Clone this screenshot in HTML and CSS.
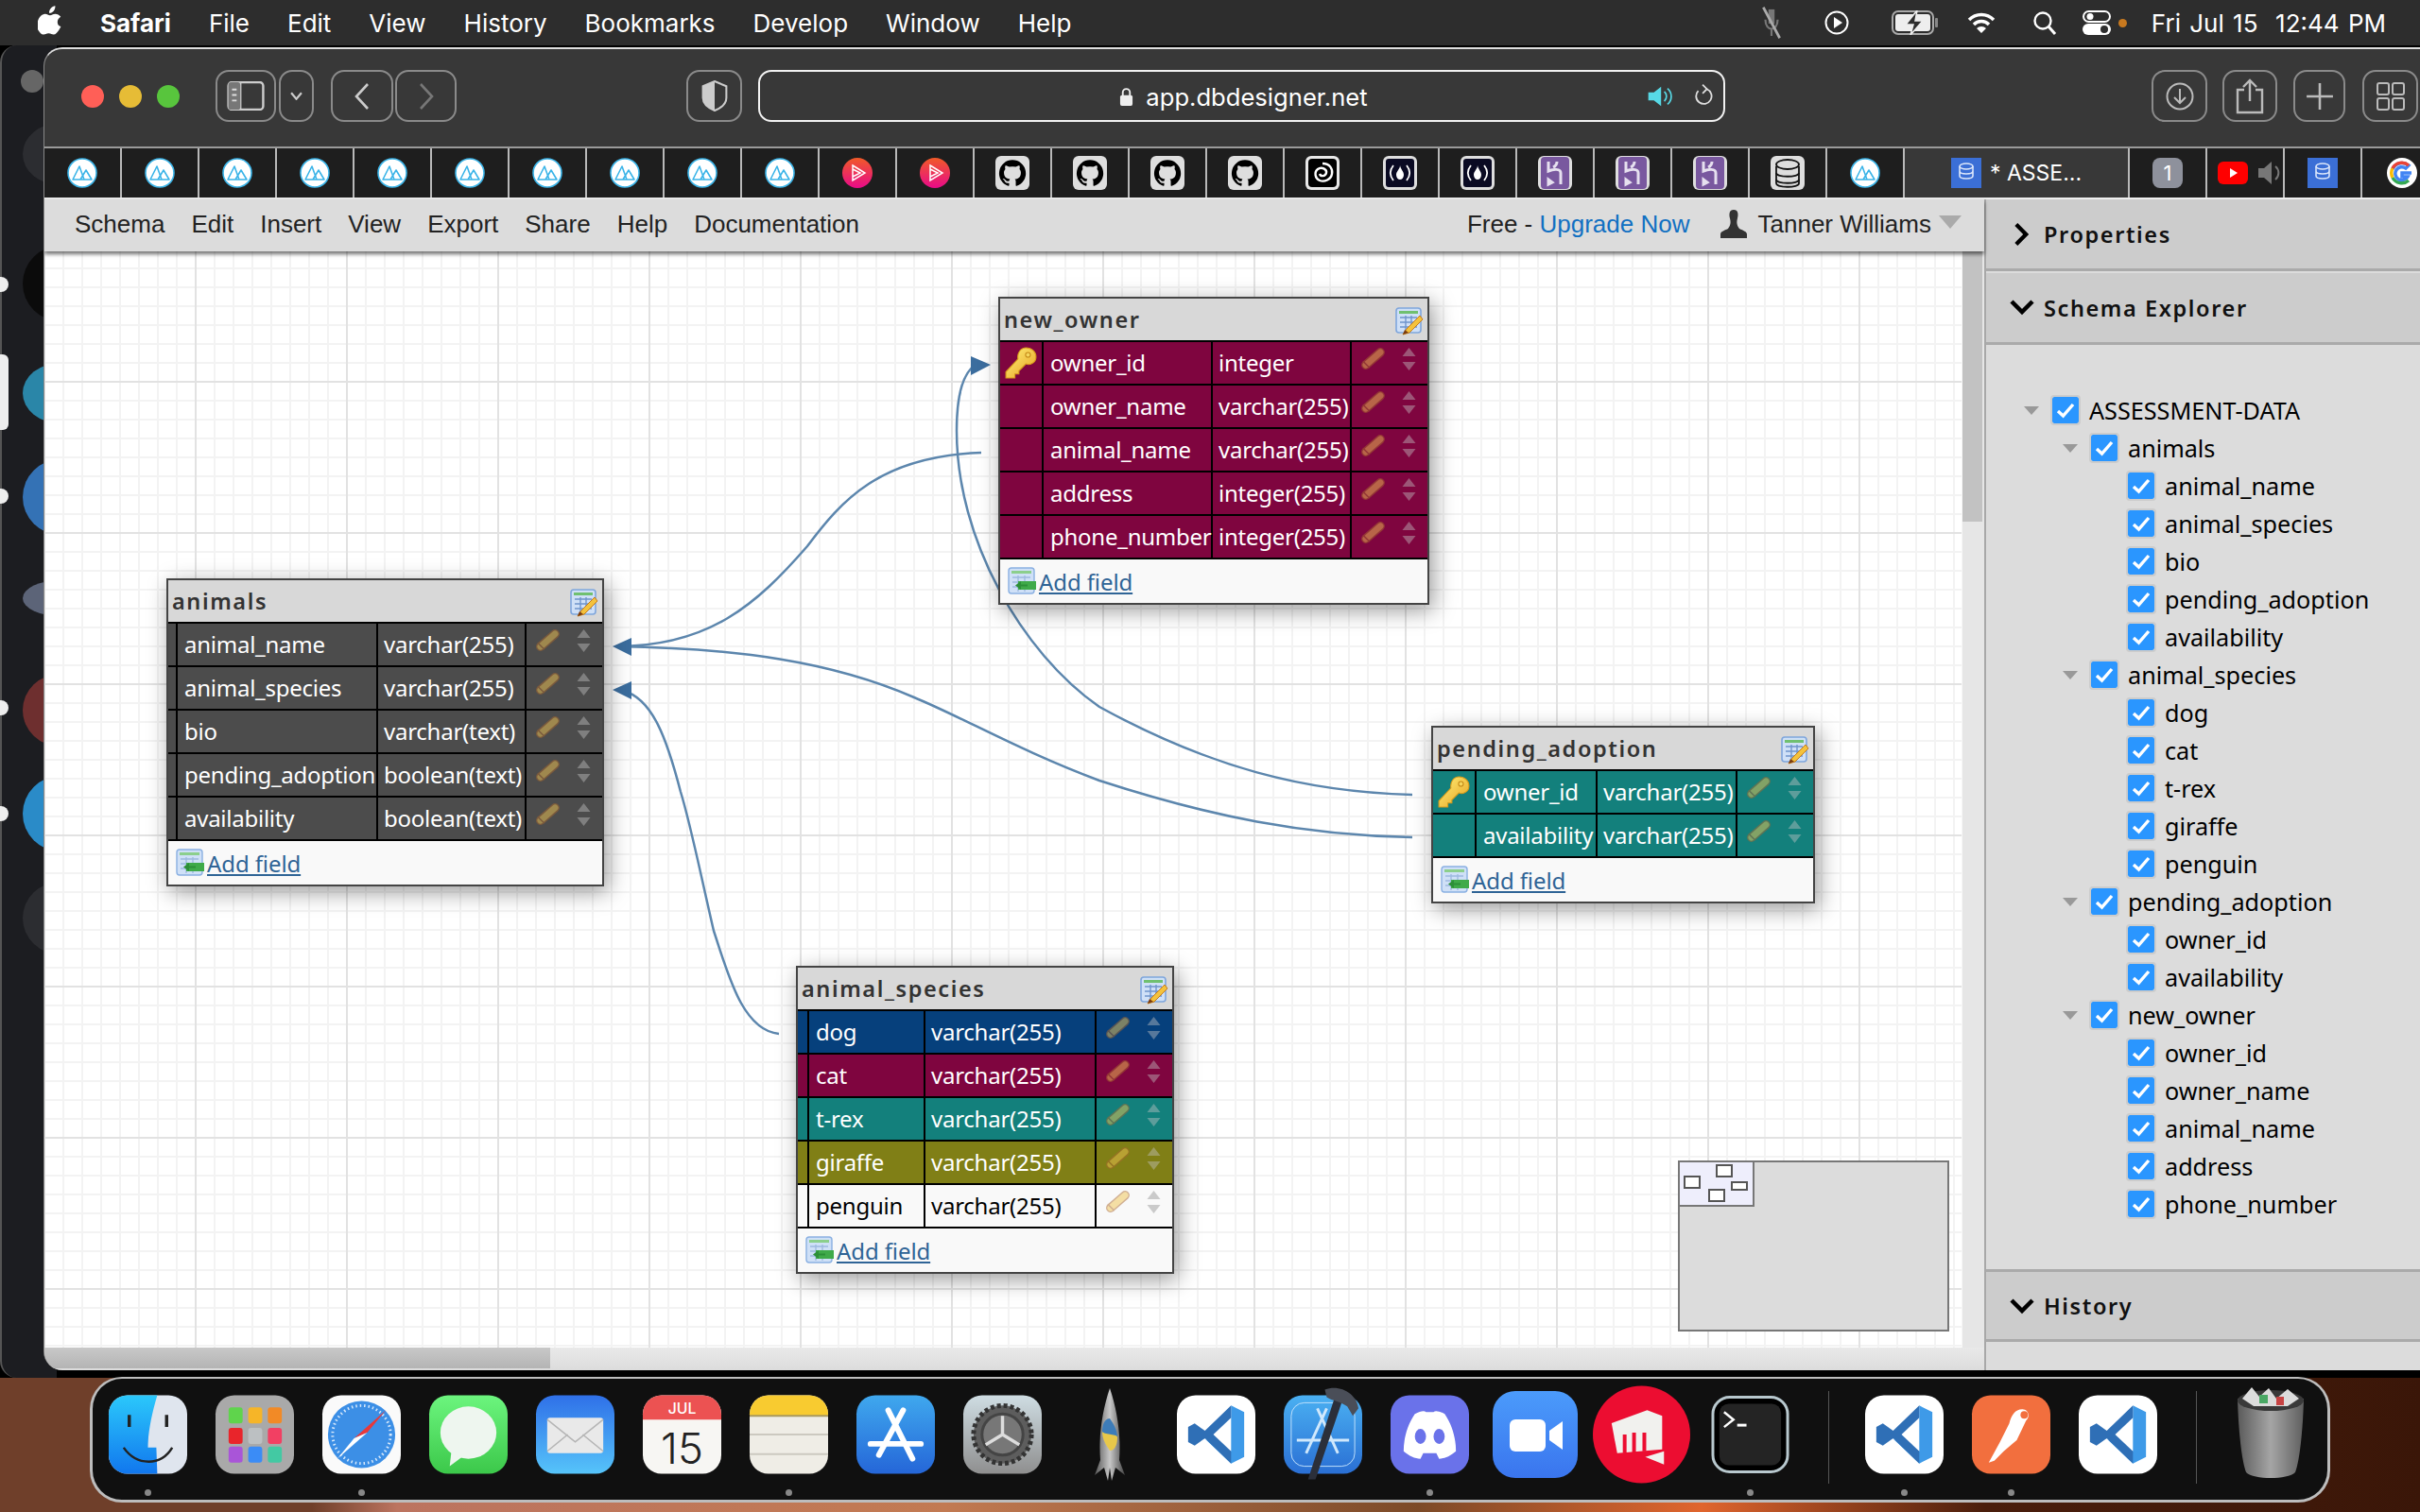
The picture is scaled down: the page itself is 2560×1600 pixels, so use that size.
FILE: index.html
```html
<!DOCTYPE html>
<html lang="en">
<head>
<meta charset="utf-8">
<title>app.dbdesigner.net</title>
<link rel="stylesheet" href="styles.css">
</head>
<body>
<svg class="defs" width="0" height="0" aria-hidden="true">
  <defs>
    <linearGradient id="gPlural" x1="0" y1="0" x2="0" y2="1"><stop offset="0" stop-color="#f05a28"/><stop offset="1" stop-color="#e80a89"/></linearGradient>
    <linearGradient id="gFinder" x1="0" y1="0" x2="0" y2="1"><stop offset="0" stop-color="#2bc8fb"/><stop offset="1" stop-color="#1177ee"/></linearGradient>
    <linearGradient id="gMsg" x1="0" y1="0" x2="0" y2="1"><stop offset="0" stop-color="#6cf57e"/><stop offset="1" stop-color="#3cc84a"/></linearGradient>
    <linearGradient id="gMail" x1="0" y1="0" x2="0" y2="1"><stop offset="0" stop-color="#2f70e8"/><stop offset="1" stop-color="#56c4fa"/></linearGradient>
    <linearGradient id="gStore" x1="0" y1="0" x2="0" y2="1"><stop offset="0" stop-color="#3fa8ee"/><stop offset="1" stop-color="#2566d8"/></linearGradient>
    <linearGradient id="gPrefs" x1="0" y1="0" x2="0" y2="1"><stop offset="0" stop-color="#cfdde3"/><stop offset="1" stop-color="#8f8f8f"/></linearGradient>
    <linearGradient id="gXcode" x1="0" y1="0" x2="0" y2="1"><stop offset="0" stop-color="#4ab0f2"/><stop offset="1" stop-color="#2a6fd4"/></linearGradient>
    <linearGradient id="gZoom" x1="0" y1="0" x2="0" y2="1"><stop offset="0" stop-color="#4b9bfb"/><stop offset="1" stop-color="#3a75ee"/></linearGradient>
    <linearGradient id="gTrash" x1="0" y1="0" x2="1" y2="0"><stop offset="0" stop-color="#5a5a5a"/><stop offset=".5" stop-color="#a5a5a5"/><stop offset="1" stop-color="#5f5f5f"/></linearGradient>
    <linearGradient id="gRocket" x1="0" y1="0" x2="1" y2="0"><stop offset="0" stop-color="#555"/><stop offset=".5" stop-color="#c8c8c8"/><stop offset="1" stop-color="#444"/></linearGradient>
    <linearGradient id="gKey" x1="0" y1="0" x2="1" y2="1"><stop offset="0" stop-color="#fff07a"/><stop offset="1" stop-color="#e7a21f"/></linearGradient>

    <symbol id="i-prisma" viewBox="0 0 32 32">
      <circle cx="16" cy="16" r="15" fill="#fff" stroke="#3bb4e8" stroke-width="1.6"/>
      <path d="M6 23 L13 9 L18 23 Z M14 23 L20 13 L26 23 Z" fill="none" stroke="#3bb4e8" stroke-width="1.6" stroke-linejoin="round"/>
    </symbol>
    <symbol id="i-plural" viewBox="0 0 32 32">
      <circle cx="16" cy="16" r="16" fill="url(#gPlural)"/>
      <path d="M11 8 L24 16 L11 24 Z M11 12 L19 16 L11 20" fill="none" stroke="#fff" stroke-width="1.5"/>
    </symbol>
    <symbol id="i-gh" viewBox="0 0 36 36">
      <rect width="36" height="36" rx="6" fill="#dedede"/>
      <path transform="translate(4 4) scale(1.17)" fill="#000" d="M12 .3a12 12 0 0 0-3.8 23.4c.6.1.8-.3.8-.6v-2c-3.3.7-4-1.6-4-1.6-.6-1.4-1.4-1.8-1.4-1.8-1-.7.1-.7.1-.7 1.2 0 1.9 1.2 1.9 1.2 1 1.8 2.8 1.3 3.5 1 0-.8.4-1.3.7-1.6-2.7-.3-5.5-1.3-5.5-6 0-1.2.5-2.3 1.3-3.1-.2-.4-.6-1.6 0-3.2 0 0 1-.3 3.4 1.2a11.5 11.5 0 0 1 6 0c2.3-1.5 3.3-1.2 3.3-1.2.6 1.6.2 2.8 0 3.2.9.8 1.3 1.9 1.3 3.2 0 4.6-2.8 5.6-5.5 5.9.5.4.9 1 .9 2.2v3.3c0 .3.1.7.8.6A12 12 0 0 0 12 .3"/>
    </symbol>
    <symbol id="i-spiral" viewBox="0 0 36 36">
      <rect width="36" height="36" rx="6" fill="#e8e8e8"/>
      <rect x="3" y="3" width="30" height="30" rx="4" fill="#000"/>
      <path d="M18 8 C26 8 29 14 28 19 C27 25 20 28 15 26 C10 24 9 17 13 14 C17 11 23 14 22 18 C21 22 16 22 15 19" fill="none" stroke="#fff" stroke-width="2.4"/>
    </symbol>
    <symbol id="i-fcc" viewBox="0 0 36 36">
      <rect width="36" height="36" rx="6" fill="#dedede"/>
      <rect x="3" y="3" width="30" height="30" rx="3" fill="#0a0a23"/>
      <path d="M11 10 C7 15 7 21 11 26 M25 10 C29 15 29 21 25 26" fill="none" stroke="#fff" stroke-width="1.8"/>
      <path d="M18 10 C18 14 14 16 14 20 C14 23 16 25 18 25 C20 25 22 23 22 20 C22 16 19 15 18 10Z" fill="#fff"/>
    </symbol>
    <symbol id="i-heroku" viewBox="0 0 36 36">
      <rect width="36" height="36" rx="6" fill="#dedede"/>
      <rect x="3" y="1" width="30" height="34" rx="4" fill="#79589f"/>
      <path d="M11 6 V16 C16 14 24 13 24 18 V30 M11 30 V25 L15 28 L11 30Z M20 6 C20 9 18 11 16 12" fill="none" stroke="#e6e0ef" stroke-width="3"/>
    </symbol>
    <symbol id="i-stack" viewBox="0 0 36 36">
      <rect width="36" height="36" rx="6" fill="#dedede"/>
      <g fill="#ddd" stroke="#111" stroke-width="1.8">
        <path d="M6 25 v4 c0 5 24 5 24 0 v-4"/><path d="M6 18 v7 c0 5 24 5 24 0 v-7"/><path d="M6 11 v7 c0 5 24 5 24 0 v-7"/>
        <ellipse cx="18" cy="9" rx="12" ry="5"/>
      </g>
    </symbol>
    <symbol id="i-dbd" viewBox="0 0 32 32">
      <rect width="32" height="32" fill="#3b6fd6"/>
      <g fill="none" stroke="#dbe6fa" stroke-width="1.6">
        <ellipse cx="16" cy="9" rx="7" ry="3"/><path d="M9 9 v5 c0 4 14 4 14 0 v-5 M9 14 v5 c0 4 14 4 14 0 v-5"/>
      </g>
    </symbol>
    <symbol id="i-edit" viewBox="0 0 30 30">
      <rect x="1" y="1" width="26" height="26" rx="3" fill="#cfe0f7" stroke="#7fa6dc" stroke-width="1.6"/>
      <rect x="4" y="4" width="20" height="3" fill="#70c070"/>
      <path d="M5 11 H23 M5 16 H23 M5 21 H23 M11 9 V25 M17 9 V25" stroke="#6f94cc" stroke-width="1.4"/>
      <path d="M26 9 L12 23 L8 29 L15 27 L29 13 Z" fill="#f4c23c" stroke="#c47a1c" stroke-width="1"/>
      <path d="M8 29 L10 24 L14 27 Z" fill="#7a3c10"/>
    </symbol>
    <symbol id="i-add" viewBox="0 0 30 30">
      <rect x="1" y="1" width="27" height="27" rx="3" fill="#cfe0f7" stroke="#8ab0e2" stroke-width="1.4"/>
      <rect x="4" y="4" width="21" height="3" fill="#8ccf8c"/>
      <path d="M5 11 H24 M5 16 H24 M5 21 H24 M11 9 V26 M18 9 V26" stroke="#9db8df" stroke-width="1.3"/>
      <path d="M11 15 H30 V24 H11 Z" fill="#3faa49"/>
      <path d="M8 19.500 L14 15 V24 Z M12 18.500 H21 V20.500 H12 Z" fill="#2c8f38"/>
    </symbol>
    <symbol id="i-pencil" viewBox="0 0 26 24">
      <path d="M5 19 L21 5" fill="none" stroke="#a9682f" stroke-width="10" stroke-linecap="round"/>
      <path d="M5 19 L21 5" fill="none" stroke="#f1c451" stroke-width="7" stroke-linecap="round"/>
      <path d="M2 15 L9 22" stroke="#a9682f" stroke-width="1.500"/>
    </symbol>
    <symbol id="i-updown" viewBox="0 0 14 24">
      <path d="M7 0 L14 9 H0 Z M0 15 H14 L7 24 Z" fill="#c6c6c6"/>
    </symbol>
    <symbol id="i-key" viewBox="0 0 32 32">
      <path d="M21 1 C27 1 31 5 31 10 C31 15 26 19 21 17 L14 24 L14 27 L10 27 L10 31 L1 31 L1 25 L13 12 C12 6 16 1 21 1Z" fill="url(#gKey)" stroke="#d69a1a" stroke-width="1"/>
      <circle cx="23" cy="8" r="2.4" fill="#f5d65e" stroke="#c48a18"/>
    </symbol>
    <symbol id="i-check" viewBox="0 0 28 28">
      <rect width="28" height="28" rx="2" fill="#2a96ff"/>
      <path d="M6 15 L11.5 20 L22 8" fill="none" stroke="#fff" stroke-width="3.4"/>
    </symbol>
    <symbol id="i-code" viewBox="0 0 84 84">
      <rect width="84" height="84" rx="20" fill="#fff"/>
      <path d="M58 11 L72 18 V66 L58 73 L22 39 L12 47 L20 42 L58 60 Z" fill="#3e9ae8"/>
      <path d="M58 11 L30 38 L19 30 L12 34 V50 L19 54 L30 46 L58 73 V60 L39 42 L58 24 Z" fill="#2f6fb6"/>
    </symbol>
  </defs>
</svg>

<div class="screen">
  <div class="under-window">
    <span class="uw-pill"></span>
    <span class="uw-avatar av-0"></span><span class="uw-avatar av-1"></span><span class="uw-avatar av-2"></span><span class="uw-avatar av-3"></span><span class="uw-avatar av-4"></span><span class="uw-avatar av-5"></span><span class="uw-avatar av-6"></span><span class="uw-avatar av-7"></span>
    <span class="uw-dot uw-a"></span><span class="uw-dot uw-b"></span><span class="uw-dot uw-c"></span><span class="uw-dot uw-d"></span>
    <span class="uw-tab"></span>
  </div>

  <header class="menubar">
    <svg class="apple" viewBox="0 0 24 28"><path fill="#fff" d="M17 0c.2 2-.6 3.700-1.600 4.900-1 1.200-2.700 2.200-4.300 2-.2-1.800.7-3.600 1.600-4.700C13.800 1 15.500.1 17 0zM22.500 20c-.7 1.600-1.100 2.300-2 3.700-1.300 2-3 4.200-5.100 4.200-1.900 0-2.400-1.200-4.900-1.200s-3.100 1.300-5 1.200C3.400 27.900 1.900 25.900.6 23.900-3 18 1.400 8 7 7.800c2-.1 3.300 1.300 4.900 1.300 1.600 0 2.700-1.400 5.200-1.400 1.900 0 3.900 1 5.300 2.800-4.600 2.500-3.900 9.100.1 9.500z"/></svg>
    <nav class="menu-items">
      <span class="strong">Safari</span><span>File</span><span>Edit</span><span>View</span><span>History</span><span>Bookmarks</span><span>Develop</span><span>Window</span><span>Help</span>
    </nav>
    <div class="status">
      <svg class="st st-mute" viewBox="0 0 24 30"><path d="M9 2h6v14H9z" fill="#777"/><path d="M6 12c0 12 12 12 12 0M12 22v6" fill="none" stroke="#777" stroke-width="2"/><path d="M4 0 L20 30" stroke="#aaa" stroke-width="2.5"/></svg>
      <svg class="st st-play" viewBox="0 0 26 26"><circle cx="13" cy="13" r="11.500" fill="none" stroke="#fff" stroke-width="2"/><path d="M10 7 L19 13 L10 19Z" fill="#fff"/></svg>
      <svg class="st st-batt" viewBox="0 0 50 26"><rect x="1" y="1" width="43" height="24" rx="6" fill="none" stroke="#aaa" stroke-width="2"/><rect x="4" y="4" width="37" height="18" rx="3" fill="#eee"/><rect x="46" y="8" width="3" height="10" rx="1" fill="#888"/><path d="M27 0 L15 15 H23 L20 26 L33 11 H25 Z" fill="#2d2d2d" stroke="#eee" stroke-width="1.500"/></svg>
      <svg class="st st-wifi" viewBox="0 0 30 24"><path d="M2 9 A18 18 0 0 1 28 9 M7 14 A11 11 0 0 1 23 14" fill="none" stroke="#fff" stroke-width="3.400"/><path d="M15 23 L10 18 A7 7 0 0 1 20 18 Z" fill="#fff"/></svg>
      <svg class="st st-search" viewBox="0 0 26 26"><circle cx="11" cy="11" r="8.500" fill="none" stroke="#fff" stroke-width="2.400"/><path d="M17 17 L24 25" stroke="#fff" stroke-width="3"/></svg>
      <svg class="st st-cc" viewBox="0 0 30 26"><rect x="1" y="1" width="28" height="11" rx="5.500" fill="none" stroke="#fff" stroke-width="2"/><circle cx="8" cy="6.500" r="3.500" fill="#fff"/><rect y="14" width="30" height="12" rx="6" fill="#fff"/><circle cx="23" cy="20" r="4" fill="#2d2d2d"/></svg>
      <span class="st-dot"></span>
      <span class="clock">Fri Jul 15&nbsp; 12:44 PM</span>
    </div>
  </header>

  <div class="window">
    <div class="toolbar">
      <div class="traffic"><span class="tl red"></span><span class="tl yellow"></span><span class="tl green"></span></div>
      <div class="btn b-side"><svg viewBox="0 0 40 32" class="ic-side"><rect x="1" y="1" width="38" height="30" rx="4" fill="none" stroke="#ccc" stroke-width="2.500"/><path d="M14 1 V31" stroke="#ccc" stroke-width="2.500"/><rect x="1" y="1" width="13" height="30" rx="3" fill="#777"/><path d="M5 9h5M5 15h5M5 21h5" stroke="#ddd" stroke-width="2"/></svg></div>
      <div class="btn b-drop"><svg viewBox="0 0 12 8" class="ic-drop"><path d="M1 1 L6 7 L11 1" fill="none" stroke="#ccc" stroke-width="2"/></svg></div>
      <div class="btn b-back"><svg viewBox="0 0 16 28" class="ic-nav"><path d="M14 1 L2 14 L14 27" fill="none" stroke="#ccc" stroke-width="2.600"/></svg></div>
      <div class="btn b-fwd"><svg viewBox="0 0 16 28" class="ic-nav"><path d="M2 1 L14 14 L2 27" fill="none" stroke="#777" stroke-width="2.600"/></svg></div>
      <div class="btn b-shield"><svg viewBox="0 0 26 32" class="ic-shield"><path d="M13 1 L25 6 V18 C25 25 18 29 13 31 C8 29 1 25 1 18 V6 Z" fill="none" stroke="#ccc" stroke-width="2"/><path d="M13 1 L1 6 V18 C1 25 8 29 13 31 Z" fill="#ccc"/></svg></div>
      <div class="urlbar">
        <svg viewBox="0 0 16 22" class="ic-lock"><path d="M4 10 V6 a4 4 0 0 1 8 0 V10" fill="none" stroke="#eee" stroke-width="2"/><rect x="1" y="9" width="14" height="12" rx="2" fill="#eee"/></svg>
        <span class="url-text">app.dbdesigner.net</span>
        <div class="url-right">
          <svg viewBox="0 0 30 26" class="ic-sound"><path d="M1 8 H8 L17 1 V25 L8 18 H1Z" fill="#57d9e6"/><path d="M21 7 A8 8 0 0 1 21 19 M25 3 A13 13 0 0 1 25 23" fill="none" stroke="#57d9e6" stroke-width="2"/></svg>
          <svg viewBox="0 0 22 28" class="ic-reload"><path d="M15 6 A9 9 0 1 1 5 8" fill="none" stroke="#ddd" stroke-width="2"/><path d="M10 1 L15 6 L10 11" fill="none" stroke="#ddd" stroke-width="2"/></svg>
        </div>
      </div>
      <div class="btn b-dl"><svg viewBox="0 0 30 30" class="ic-tool"><circle cx="15" cy="15" r="13.500" fill="none" stroke="#bbb" stroke-width="2"/><path d="M15 7 V22 M9 16 L15 22 L21 16" fill="none" stroke="#bbb" stroke-width="2"/></svg></div>
      <div class="btn b-share"><svg viewBox="0 0 30 38" class="ic-share"><path d="M9 12 H2 V36 H28 V12 H21 M15 24 V2 M8 9 L15 2 L22 9" fill="none" stroke="#bbb" stroke-width="2.400"/></svg></div>
      <div class="btn b-plus"><svg viewBox="0 0 28 28" class="ic-tool"><path d="M14 1 V27 M1 14 H27" stroke="#bbb" stroke-width="2.400"/></svg></div>
      <div class="btn b-grid"><svg viewBox="0 0 30 30" class="ic-tool"><g fill="none" stroke="#bbb" stroke-width="2"><rect x="1" y="1" width="12" height="12" rx="2"/><rect x="17" y="1" width="12" height="12" rx="2"/><rect x="1" y="17" width="12" height="12" rx="2"/><rect x="17" y="17" width="12" height="12" rx="2"/></g></svg></div>
    </div>

    <div class="tabs">
      <div class="tab"><svg class="tic"><use href="#i-prisma"/></svg></div>
      <div class="tab"><svg class="tic"><use href="#i-prisma"/></svg></div>
      <div class="tab"><svg class="tic"><use href="#i-prisma"/></svg></div>
      <div class="tab"><svg class="tic"><use href="#i-prisma"/></svg></div>
      <div class="tab"><svg class="tic"><use href="#i-prisma"/></svg></div>
      <div class="tab"><svg class="tic"><use href="#i-prisma"/></svg></div>
      <div class="tab"><svg class="tic"><use href="#i-prisma"/></svg></div>
      <div class="tab"><svg class="tic"><use href="#i-prisma"/></svg></div>
      <div class="tab"><svg class="tic"><use href="#i-prisma"/></svg></div>
      <div class="tab"><svg class="tic"><use href="#i-prisma"/></svg></div>
      <div class="tab"><svg class="tic"><use href="#i-plural"/></svg></div>
      <div class="tab"><svg class="tic"><use href="#i-plural"/></svg></div>
      <div class="tab"><svg class="tic-l"><use href="#i-gh"/></svg></div>
      <div class="tab"><svg class="tic-l"><use href="#i-gh"/></svg></div>
      <div class="tab"><svg class="tic-l"><use href="#i-gh"/></svg></div>
      <div class="tab"><svg class="tic-l"><use href="#i-gh"/></svg></div>
      <div class="tab"><svg class="tic-l"><use href="#i-spiral"/></svg></div>
      <div class="tab"><svg class="tic-l"><use href="#i-fcc"/></svg></div>
      <div class="tab"><svg class="tic-l"><use href="#i-fcc"/></svg></div>
      <div class="tab"><svg class="tic-l"><use href="#i-heroku"/></svg></div>
      <div class="tab"><svg class="tic-l"><use href="#i-heroku"/></svg></div>
      <div class="tab"><svg class="tic-l"><use href="#i-heroku"/></svg></div>
      <div class="tab"><svg class="tic-l"><use href="#i-stack"/></svg></div>
      <div class="tab"><svg class="tic"><use href="#i-prisma"/></svg></div>
      <div class="tab-active"><svg class="tic"><use href="#i-dbd"/></svg><span>* ASSE...</span></div>
      <div class="tab"><span class="badge-one">1</span></div>
      <div class="tab tab-yt">
        <svg class="ic-yt" viewBox="0 0 32 24"><rect width="32" height="24" rx="6" fill="#f00"/><path d="M13 7 L21 12 L13 17Z" fill="#fff"/></svg>
        <svg class="ic-spk" viewBox="0 0 26 26"><path d="M1 8 H7 L15 1 V25 L7 18 H1Z" fill="#777"/><path d="M19 6 A9 9 0 0 1 19 20" fill="none" stroke="#777" stroke-width="2"/></svg>
      </div>
      <div class="tab"><svg class="tic"><use href="#i-dbd"/></svg></div>
      <div class="tab tab-end">
        <svg class="tic" viewBox="0 0 32 32"><circle cx="16" cy="16" r="16" fill="#fff"/><path d="M26 16 H16 V20 H22 A7 7 0 1 1 20 11 L23 8 A11 11 0 0 0 6 12" fill="none" stroke="#4285f4" stroke-width="3.500"/><path d="M6 11 A11 11 0 0 0 6 21" fill="none" stroke="#fbbc05" stroke-width="3.500"/><path d="M6 21 A11 11 0 0 0 23 24" fill="none" stroke="#34a853" stroke-width="3.500"/><path d="M6 11 A11 11 0 0 1 23 8" fill="none" stroke="#ea4335" stroke-width="3.500"/></svg>
      </div>
    </div>

    <div class="app">
      <div class="left">
        <div class="appmenu">
          <nav class="app-items"><span>Schema</span><span>Edit</span><span>Insert</span><span>View</span><span>Export</span><span>Share</span><span>Help</span><span>Documentation</span></nav>
          <div class="app-right">
            <span class="plan">Free - <a class="upgrade">Upgrade Now</a></span>
            <svg class="ic-user" viewBox="0 0 28 30"><path d="M14 0 C19 0 19 5 18 9 C17 13 17 16 20 20 C24 22 28 23 28 26 V30 H0 V26 C0 23 4 22 8 20 C11 16 11 13 10 9 C9 5 9 0 14 0Z" fill="#333"/></svg>
            <span class="user">Tanner Williams</span>
            <span class="caret"></span>
          </div>
        </div>
        <div class="work">
          <div class="canvas">
            <svg class="links" viewBox="47 266 2030 1160">
              <g fill="none" stroke="#5c86ad" stroke-width="2.500">
                <path d="M1038 479 C930 483 890 530 854 578 C800 640 750 684 652 684"/>
                <path d="M1494 841 C1380 838 1280 812 1163 748 C1080 690 1012 570 1012 456 C1012 420 1018 395 1032 386"/>
                <path d="M1494 886 C1380 884 1280 864 1163 826 C1080 795 1020 760 967 738 C880 700 780 686 652 684"/>
                <path d="M824 1094 C785 1090 770 1030 755 985 C740 920 730 870 720 838 C705 780 690 740 660 731"/>
              </g>
              <g fill="#3b6d9e">
                <path d="M648 684 L668 675 V694 Z"/>
                <path d="M648 730 L668 721 V740 Z"/>
                <path d="M1048 386 L1027 377 V397 Z"/>
              </g>
            </svg>

            <section class="tbl t-owner">
              <div class="tbl-head"><span>new_owner</span><svg class="ic-edit"><use href="#i-edit"/></svg></div>
              <div class="row maroon"><div class="c k"><svg class="ic-key"><use href="#i-key"/></svg></div><div class="c n">owner_id</div><div class="c y">integer</div><div class="c a"><svg class="ic-pencil"><use href="#i-pencil"/></svg><svg class="ic-updown"><use href="#i-updown"/></svg></div></div>
              <div class="row maroon"><div class="c k"></div><div class="c n">owner_name</div><div class="c y">varchar(255)</div><div class="c a"><svg class="ic-pencil"><use href="#i-pencil"/></svg><svg class="ic-updown"><use href="#i-updown"/></svg></div></div>
              <div class="row maroon"><div class="c k"></div><div class="c n">animal_name</div><div class="c y">varchar(255)</div><div class="c a"><svg class="ic-pencil"><use href="#i-pencil"/></svg><svg class="ic-updown"><use href="#i-updown"/></svg></div></div>
              <div class="row maroon"><div class="c k"></div><div class="c n">address</div><div class="c y">integer(255)</div><div class="c a"><svg class="ic-pencil"><use href="#i-pencil"/></svg><svg class="ic-updown"><use href="#i-updown"/></svg></div></div>
              <div class="row maroon"><div class="c k"></div><div class="c n">phone_number</div><div class="c y">integer(255)</div><div class="c a"><svg class="ic-pencil"><use href="#i-pencil"/></svg><svg class="ic-updown"><use href="#i-updown"/></svg></div></div>
              <div class="tbl-foot"><svg class="ic-add"><use href="#i-add"/></svg><a class="add-link">Add field</a></div>
            </section>

            <section class="tbl t-animals">
              <div class="tbl-head"><span>animals</span><svg class="ic-edit"><use href="#i-edit"/></svg></div>
              <div class="row grey"><div class="c k"></div><div class="c n">animal_name</div><div class="c y">varchar(255)</div><div class="c a"><svg class="ic-pencil"><use href="#i-pencil"/></svg><svg class="ic-updown"><use href="#i-updown"/></svg></div></div>
              <div class="row grey"><div class="c k"></div><div class="c n">animal_species</div><div class="c y">varchar(255)</div><div class="c a"><svg class="ic-pencil"><use href="#i-pencil"/></svg><svg class="ic-updown"><use href="#i-updown"/></svg></div></div>
              <div class="row grey"><div class="c k"></div><div class="c n">bio</div><div class="c y">varchar(text)</div><div class="c a"><svg class="ic-pencil"><use href="#i-pencil"/></svg><svg class="ic-updown"><use href="#i-updown"/></svg></div></div>
              <div class="row grey"><div class="c k"></div><div class="c n">pending_adoption</div><div class="c y">boolean(text)</div><div class="c a"><svg class="ic-pencil"><use href="#i-pencil"/></svg><svg class="ic-updown"><use href="#i-updown"/></svg></div></div>
              <div class="row grey"><div class="c k"></div><div class="c n">availability</div><div class="c y">boolean(text)</div><div class="c a"><svg class="ic-pencil"><use href="#i-pencil"/></svg><svg class="ic-updown"><use href="#i-updown"/></svg></div></div>
              <div class="tbl-foot"><svg class="ic-add"><use href="#i-add"/></svg><a class="add-link">Add field</a></div>
            </section>

            <section class="tbl t-species">
              <div class="tbl-head"><span>animal_species</span><svg class="ic-edit"><use href="#i-edit"/></svg></div>
              <div class="row navy"><div class="c k"></div><div class="c n">dog</div><div class="c y">varchar(255)</div><div class="c a"><svg class="ic-pencil"><use href="#i-pencil"/></svg><svg class="ic-updown"><use href="#i-updown"/></svg></div></div>
              <div class="row maroon"><div class="c k"></div><div class="c n">cat</div><div class="c y">varchar(255)</div><div class="c a"><svg class="ic-pencil"><use href="#i-pencil"/></svg><svg class="ic-updown"><use href="#i-updown"/></svg></div></div>
              <div class="row teal"><div class="c k"></div><div class="c n">t-rex</div><div class="c y">varchar(255)</div><div class="c a"><svg class="ic-pencil"><use href="#i-pencil"/></svg><svg class="ic-updown"><use href="#i-updown"/></svg></div></div>
              <div class="row olive"><div class="c k"></div><div class="c n">giraffe</div><div class="c y">varchar(255)</div><div class="c a"><svg class="ic-pencil"><use href="#i-pencil"/></svg><svg class="ic-updown"><use href="#i-updown"/></svg></div></div>
              <div class="row paper"><div class="c k"></div><div class="c n">penguin</div><div class="c y">varchar(255)</div><div class="c a"><svg class="ic-pencil"><use href="#i-pencil"/></svg><svg class="ic-updown"><use href="#i-updown"/></svg></div></div>
              <div class="tbl-foot"><svg class="ic-add"><use href="#i-add"/></svg><a class="add-link">Add field</a></div>
            </section>

            <section class="tbl t-pending">
              <div class="tbl-head"><span>pending_adoption</span><svg class="ic-edit"><use href="#i-edit"/></svg></div>
              <div class="row teal"><div class="c k"><svg class="ic-key"><use href="#i-key"/></svg></div><div class="c n">owner_id</div><div class="c y">varchar(255)</div><div class="c a"><svg class="ic-pencil"><use href="#i-pencil"/></svg><svg class="ic-updown"><use href="#i-updown"/></svg></div></div>
              <div class="row teal"><div class="c k"></div><div class="c n">availability</div><div class="c y">varchar(255)</div><div class="c a"><svg class="ic-pencil"><use href="#i-pencil"/></svg><svg class="ic-updown"><use href="#i-updown"/></svg></div></div>
              <div class="tbl-foot"><svg class="ic-add"><use href="#i-add"/></svg><a class="add-link">Add field</a></div>
            </section>

            <div class="minimap">
              <div class="mini-view"></div>
              <span class="mini-box mb-1"></span><span class="mini-box mb-2"></span><span class="mini-box mb-3"></span><span class="mini-box mb-4"></span>
            </div>
          </div>
          <div class="vscroll"><span class="vthumb"></span></div>
        </div>
        <div class="hscroll"><span class="hthumb"></span></div>
      </div>

      <aside class="side">
        <div class="panel-head"><svg class="chev" viewBox="0 0 18 26"><path d="M3 2 L14 13 L3 24" fill="none" stroke="#000" stroke-width="4.500"/></svg><span>Properties</span></div>
        <div class="panel-head panel-2"><svg class="chev-d" viewBox="0 0 26 18"><path d="M2 3 L13 14 L24 3" fill="none" stroke="#000" stroke-width="4.500"/></svg><span>Schema Explorer</span></div>
        <ul class="tree">
          <li class="lv0"><span class="tri"></span><svg class="cb"><use href="#i-check"/></svg><span>ASSESSMENT-DATA</span></li>
          <li class="lv1"><span class="tri"></span><svg class="cb"><use href="#i-check"/></svg><span>animals</span></li>
          <li class="lv2"><svg class="cb"><use href="#i-check"/></svg><span>animal_name</span></li>
          <li class="lv2"><svg class="cb"><use href="#i-check"/></svg><span>animal_species</span></li>
          <li class="lv2"><svg class="cb"><use href="#i-check"/></svg><span>bio</span></li>
          <li class="lv2"><svg class="cb"><use href="#i-check"/></svg><span>pending_adoption</span></li>
          <li class="lv2"><svg class="cb"><use href="#i-check"/></svg><span>availability</span></li>
          <li class="lv1"><span class="tri"></span><svg class="cb"><use href="#i-check"/></svg><span>animal_species</span></li>
          <li class="lv2"><svg class="cb"><use href="#i-check"/></svg><span>dog</span></li>
          <li class="lv2"><svg class="cb"><use href="#i-check"/></svg><span>cat</span></li>
          <li class="lv2"><svg class="cb"><use href="#i-check"/></svg><span>t-rex</span></li>
          <li class="lv2"><svg class="cb"><use href="#i-check"/></svg><span>giraffe</span></li>
          <li class="lv2"><svg class="cb"><use href="#i-check"/></svg><span>penguin</span></li>
          <li class="lv1"><span class="tri"></span><svg class="cb"><use href="#i-check"/></svg><span>pending_adoption</span></li>
          <li class="lv2"><svg class="cb"><use href="#i-check"/></svg><span>owner_id</span></li>
          <li class="lv2"><svg class="cb"><use href="#i-check"/></svg><span>availability</span></li>
          <li class="lv1"><span class="tri"></span><svg class="cb"><use href="#i-check"/></svg><span>new_owner</span></li>
          <li class="lv2"><svg class="cb"><use href="#i-check"/></svg><span>owner_id</span></li>
          <li class="lv2"><svg class="cb"><use href="#i-check"/></svg><span>owner_name</span></li>
          <li class="lv2"><svg class="cb"><use href="#i-check"/></svg><span>animal_name</span></li>
          <li class="lv2"><svg class="cb"><use href="#i-check"/></svg><span>address</span></li>
          <li class="lv2"><svg class="cb"><use href="#i-check"/></svg><span>phone_number</span></li>
        </ul>
        <div class="panel-head panel-3"><svg class="chev-d" viewBox="0 0 26 18"><path d="M2 3 L13 14 L24 3" fill="none" stroke="#000" stroke-width="4.500"/></svg><span>History</span></div>
      </aside>
    </div>
  </div>

  <div class="wallpaper"></div>

  <footer class="dock">
    <div class="dk"><svg class="dki" viewBox="0 0 84 84"><rect width="84" height="84" rx="20" fill="#dfe5ee"/><path d="M20 0 H52 C46 20 42 40 42 56 H51 L52 84 H20 A20 20 0 0 1 0 64 V20 A20 20 0 0 1 20 0Z" fill="url(#gFinder)"/><path d="M22 21 V34 M62 21 V34" stroke="#222" stroke-width="3.500"/><path d="M16 56 C30 76 56 76 68 56" fill="none" stroke="#222" stroke-width="2.500"/></svg><span class="run"></span></div>
    <div class="dk"><svg class="dki" viewBox="0 0 84 84"><rect width="84" height="84" rx="20" fill="#a9a9a9"/><rect x="14" y="13" width="15" height="17" rx="3" fill="#5fd44c"/><rect x="35" y="13" width="15" height="17" rx="3" fill="#f6b528"/><rect x="56" y="13" width="15" height="17" rx="3" fill="#f28a26"/><rect x="14" y="35" width="15" height="17" rx="3" fill="#e9252b"/><rect x="35" y="35" width="15" height="17" rx="3" fill="#bcc0c2"/><rect x="56" y="35" width="15" height="17" rx="3" fill="#f24063"/><rect x="14" y="55" width="15" height="17" rx="3" fill="#a955d8"/><rect x="35" y="55" width="15" height="17" rx="3" fill="#3b8cf6"/><rect x="56" y="55" width="15" height="17" rx="3" fill="#43c9a3"/></svg></div>
    <div class="dk"><svg class="dki" viewBox="0 0 84 84"><rect width="84" height="84" rx="20" fill="#fafafa"/><circle cx="42" cy="42" r="36" fill="#3c8fe6"/><circle cx="42" cy="42" r="31" fill="none" stroke="#d7e9fb" stroke-width="3" stroke-dasharray="1.500 3"/><path d="M68 16 L34 46 L48 40 Z" fill="#e8383a"/><path d="M16 68 L34 46 L48 40 Z" fill="#fff"/></svg><span class="run"></span></div>
    <div class="dk"><svg class="dki" viewBox="0 0 84 84"><rect width="84" height="84" rx="20" fill="url(#gMsg)"/><ellipse cx="42" cy="40" rx="30" ry="28" fill="#eef6ef"/><path d="M24 58 L22 76 L38 64 Z" fill="#eef6ef"/></svg></div>
    <div class="dk"><svg class="dki" viewBox="0 0 84 84"><rect width="84" height="84" rx="20" fill="url(#gMail)"/><rect x="12" y="24" width="60" height="38" rx="3" fill="#e9e9e9"/><path d="M12 26 L42 50 L72 26 M12 60 L34 42 M72 60 L50 42" fill="none" stroke="#b5b5b5" stroke-width="1.500"/></svg></div>
    <div class="dk"><svg class="dki" viewBox="0 0 84 84"><rect width="84" height="84" rx="20" fill="#f7f6f3"/><path d="M0 26 V20 A20 20 0 0 1 20 0 H64 A20 20 0 0 1 84 20 V26 Z" fill="#ec5252"/><text x="42" y="20" class="cal-m">JUL</text><text x="42" y="73" class="cal-d">15</text></svg></div>
    <div class="dk"><svg class="dki" viewBox="0 0 84 84"><rect width="84" height="84" rx="20" fill="#efede6"/><path d="M0 22 V20 A20 20 0 0 1 20 0 H64 A20 20 0 0 1 84 20 V22 Z" fill="#f8cb30"/><path d="M0 22 H84" stroke="#a89a60" stroke-width="2"/><path d="M0 42 H84 M0 63 H84" stroke="#ccc9c0" stroke-width="2"/></svg><span class="run"></span></div>
    <div class="dk"><svg class="dki" viewBox="0 0 84 84"><rect width="84" height="84" rx="20" fill="url(#gStore)"/><path d="M50 16 L24 64 M34 16 L60 68 " stroke="#fff" stroke-width="6" stroke-linecap="round"/><path d="M15 52 H69" stroke="#fff" stroke-width="6" stroke-linecap="round"/></svg></div>
    <div class="dk"><svg class="dki" viewBox="0 0 84 84"><rect width="84" height="84" rx="20" fill="url(#gPrefs)"/><circle cx="42" cy="42" r="31" fill="#5d5d5d" stroke="#333" stroke-width="5" stroke-dasharray="4 3"/><circle cx="42" cy="42" r="22" fill="#777" stroke="#444" stroke-width="3"/><path d="M42 42 V22 M42 42 L24 53 M42 42 L60 53" stroke="#ddd" stroke-width="3.500"/></svg></div>
    <div class="dk dk-rocket"><svg class="dki-rocket" viewBox="0 0 36 98"><path d="M18 0 C26 24 30 50 28 76 L34 92 L24 84 L20 98 L18 84 L16 98 L12 84 L2 92 L8 76 C6 50 10 24 18 0Z" fill="url(#gRocket)"/><path d="M18 32 C11 32 10 42 10 46 C10 52 22 50 26 52 C26 44 22 38 18 32Z" fill="#3d7cb8"/><path d="M18 66 C25 66 26 56 26 52 C26 48 14 50 10 46 C10 54 14 60 18 66Z" fill="#e8c84a"/></svg></div>
    <div class="dk"><svg class="dki"><use href="#i-code"/></svg></div>
    <div class="dk"><svg class="dki" viewBox="0 0 84 84"><rect width="84" height="84" rx="20" fill="url(#gXcode)"/><rect x="8" y="8" width="68" height="68" rx="14" fill="none" stroke="#bfe0fb" stroke-width="1"/><path d="M46 14 L24 62 M36 14 L58 62 M14 48 H70" stroke="#d0e8fc" stroke-width="3" fill="none"/><path d="M24 104 L32 104 L62 16 L54 12 Z" fill="#2b2f3a" transform="translate(2 -14)"/><path d="M44 -6 C60 -12 78 -2 80 14 L74 22 L68 12 C60 6 52 6 46 2 Z" fill="#4a4e58"/></svg></div>
    <div class="dk"><svg class="dki" viewBox="0 0 84 84"><rect width="84" height="84" rx="20" fill="#6a72ea"/><path d="M26 20 C32 17 36 16 38 18 H46 C48 16 52 17 58 20 C66 32 70 46 70 60 C64 65 58 68 52 68 L49 62 H35 L32 68 C26 68 20 65 14 60 C14 46 18 32 26 20Z" fill="#fff"/><ellipse cx="32" cy="44" rx="6" ry="8" fill="#6a72ea"/><ellipse cx="52" cy="44" rx="6" ry="8" fill="#6a72ea"/></svg><span class="run"></span></div>
    <div class="dk dk-zoom"><svg class="dki-zoom" viewBox="0 0 90 92"><rect width="90" height="92" rx="24" fill="url(#gZoom)"/><rect x="18" y="30" width="38" height="34" rx="6" fill="#fff"/><path d="M60 42 L74 32 V62 L60 52Z" fill="#fff"/></svg></div>
    <div class="dk dk-riot"><svg class="dki-riot" viewBox="0 0 104 104"><circle cx="52" cy="52" r="52" fill="#ec0d31"/><path d="M20 40 L58 26 L74 32 V68 L26 72 Z" fill="#f1f1ee"/><path d="M34 52 V72 M44 50 V72 M55 50 V70" stroke="#ec0d31" stroke-width="4"/><path d="M56 76 L76 70 V84 Z" fill="#f1f1ee"/></svg></div>
    <div class="dk"><svg class="dki" viewBox="0 0 84 84"><rect x="2" y="2" width="80" height="80" rx="18" fill="#000" stroke="#b8c8ce" stroke-width="3"/><rect x="9" y="9" width="66" height="66" rx="10" fill="#242424"/><path d="M14 18 L24 26 L14 34" fill="none" stroke="#fff" stroke-width="2.500"/><path d="M28 32 H38" stroke="#fff" stroke-width="3"/></svg><span class="run"></span></div>
    <span class="dock-sep sep-1"></span>
    <div class="dk"><svg class="dki"><use href="#i-code"/></svg><span class="run"></span></div>
    <div class="dk"><svg class="dki" viewBox="0 0 84 84"><rect width="84" height="84" rx="20" fill="#f26f3e"/><path d="M54 15 C60 15 63 22 58 27 L48 48 L34 60 L24 70 L18 72 L30 50 L40 30 C42 22 46 15 54 15Z" fill="#fff"/><circle cx="56" cy="21" r="4" fill="#f26f3e"/></svg><span class="run"></span></div>
    <div class="dk"><svg class="dki"><use href="#i-code"/></svg></div>
    <span class="dock-sep sep-2"></span>
    <div class="dk dk-trash"><svg class="dki-trash" viewBox="0 0 76 96"><path d="M3 12 C4 50 8 80 12 90 C20 98 56 98 64 90 C68 80 72 50 73 12 Z" fill="url(#gTrash)"/><ellipse cx="38" cy="14" rx="35" ry="11" fill="#3a3a3a"/><path d="M8 12 L18 0 L26 10 L36 1 L44 12 L56 2 L68 12 L56 20 H20 Z" fill="#dcdcdc"/><rect x="26" y="8" width="9" height="9" fill="#4aa865"/><rect x="44" y="10" width="8" height="9" fill="#c74343"/></svg></div>
  </footer>
</div>
</body>
</html>
```
FILE: styles.css
```css
* { box-sizing: border-box; }
html, body { margin: 0; padding: 0; }
body { width: 2560px; height: 1600px; overflow: hidden; background: #1c1d21; font-family: "Noto Sans", "Liberation Sans", sans-serif; }
.defs { position: absolute; }
.screen { position: relative; width: 2560px; height: 1600px; overflow: hidden; background: #000; }

/* desktop behind */
.under-window { position: absolute; left: 0; top: 48px; width: 60px; height: 1410px; background: #1c1d21; border-radius: 18px 0 0 18px; border-left: 2px solid #555; z-index: 1; }
.uw-pill { position: absolute; left: 20px; top: 26px; width: 24px; height: 24px; border-radius: 50%; background: #666; }
.uw-dot { position: absolute; left: -2px; width: 9px; height: 16px; border-radius: 0 8px 8px 0; background: #eee; }
.uw-a { top: 245px; } .uw-b { top: 469px; } .uw-c { top: 693px; } .uw-d { top: 805px; }
.uw-tab { position: absolute; left: -2px; top: 327px; width: 9px; height: 80px; background: #eee; border-radius: 0 6px 6px 0; }
.uw-avatar { position: absolute; left: 22px; width: 80px; height: 80px; border-radius: 50%; }
.av-0 { top: 82px; height: 66px; background: #2c2d31; }
.av-1 { top: 212px; background: #0b0b0b; }
.av-2 { top: 336px; height: 64px; background: #2a86a8; }
.av-3 { top: 438px; background: #3472b5; }
.av-4 { top: 566px; height: 38px; background: #5c6478; }
.av-5 { top: 665px; height: 77px; background: #6e2f2f; }
.av-6 { top: 773px; background: #2a8bc8; }
.av-7 { top: 885px; height: 77px; background: #2c2d31; }

/* menu bar */
.menubar { position: absolute; left: 0; top: 0; width: 2560px; height: 48px; background: #2d2d2d; color: #fff; display: flex; align-items: center; padding-left: 40px; font-family: Inter, "Liberation Sans", sans-serif; font-size: 26px; z-index: 3; }
.apple { width: 26px; height: 31px; margin-bottom: 6px; }
.menu-items { display: flex; gap: 40px; margin-left: 40px; }
.strong { font-weight: 700; }
.status { margin-left: auto; display: flex; align-items: center; padding-right: 36px; }
.st { display: block; }
.st-mute { width: 26px; height: 34px; margin-right: 43px; }
.st-play { width: 26px; height: 28px; margin-right: 45px; }
.st-batt { width: 50px; height: 26px; margin-right: 29px; }
.st-wifi { width: 32px; height: 24px; margin-right: 37px; }
.st-search { width: 28px; height: 26px; margin-right: 26px; }
.st-cc { width: 30px; height: 26px; margin-right: 8px; }
.st-dot { width: 9px; height: 9px; border-radius: 50%; background: #c8791f; margin-right: 26px; }
.clock { white-space: nowrap; word-spacing: 2px; }

/* browser window */
.window { position: absolute; left: 46px; top: 50px; width: 2514px; height: 1400px; background: #383838; border-radius: 20px 0 0 20px; border-top: 2px solid #ddd; border-left: 1px solid #888; overflow: hidden; display: flex; flex-direction: column; z-index: 2; }
.toolbar { height: 103px; position: relative; flex: none; }
.traffic { position: absolute; left: 39px; top: 38px; display: flex; gap: 16px; }
.tl { width: 24px; height: 24px; border-radius: 50%; }
.red { background: #ff5f57; } .yellow { background: #e6bc36; } .green { background: #58c53d; }
.btn { position: absolute; top: 22px; height: 55px; border: 2px solid #8a8a8a; border-radius: 14px; display: flex; align-items: center; justify-content: center; }
.b-side { left: 181px; width: 64px; }
.b-drop { left: 248px; width: 37px; }
.b-back { left: 303px; width: 66px; }
.b-fwd { left: 371px; width: 65px; }
.b-shield { left: 679px; width: 59px; }
.b-dl { left: 2229px; width: 59px; }
.b-share { left: 2304px; width: 58px; }
.b-plus { left: 2379px; width: 55px; }
.b-grid { left: 2452px; width: 59px; }
.ic-side { width: 40px; height: 31px; }
.ic-drop { width: 13px; height: 9px; }
.ic-nav { width: 16px; height: 28px; }
.ic-shield { width: 28px; height: 33px; }
.ic-tool { width: 30px; height: 30px; }
.ic-share { width: 30px; height: 38px; }
.urlbar { position: absolute; left: 755px; top: 22px; width: 1023px; height: 55px; border: 2px solid #f2f2f2; border-radius: 14px; display: flex; align-items: center; justify-content: center; padding-top: 2px; padding-left: 4px; color: #fff; font-family: Inter, "Liberation Sans", sans-serif; font-size: 25.600px; }
.ic-lock { width: 15px; height: 23px; margin-right: 13px; }
.url-text { line-height: 1; }
.url-right { position: absolute; right: 11px; top: 12px; display: flex; align-items: center; gap: 22px; }
.ic-sound { width: 29px; height: 22px; }
.ic-reload { width: 20px; height: 27px; }

.tabs { flex: none; height: 56px; display: flex; background: #1e1e1e; border-top: 2px solid #9a9a9a; border-bottom: 2px solid #eee; }
.tab { flex: none; width: 82px; display: flex; align-items: center; justify-content: center; border-right: 2px solid #b9b9b9; }
.tab-end { border-right: none; justify-content: flex-start; padding-left: 26px; }
.tic { width: 32px; height: 32px; }
.tic-l { width: 36px; height: 36px; }
.tab-active { flex: none; width: 238px; background: #383838; display: flex; align-items: center; padding-left: 49px; gap: 9px; color: #fff; font-family: Inter, "Liberation Sans", sans-serif; font-size: 23px; border-right: 2px solid #b9b9b9; }
.badge-one { width: 32px; height: 32px; border-radius: 8px; background: #8e919c; color: #fff; font-size: 22px; font-family: Inter, sans-serif; display: flex; align-items: center; justify-content: center; }
.tab-yt { gap: 10px; justify-content: flex-start; padding-left: 11px; }
.ic-yt { width: 32px; height: 24px; }
.ic-spk { width: 26px; height: 26px; }

.app { flex: 1; display: flex; min-height: 0; }
.left { width: 2052px; flex: none; display: flex; flex-direction: column; }
.appmenu { flex: none; height: 55px; background: #dcdcdc; display: flex; align-items: center; padding: 0 24px 3px 32px; font-family: "Liberation Sans", Arial, sans-serif; font-size: 26px; color: #222; position: relative; z-index: 2; box-shadow: 0 3px 4px rgba(0,0,0,.55); }
.app-items { display: flex; gap: 28px; }
.app-right { margin-left: auto; display: flex; align-items: center; }
.upgrade { color: #1170c2; }
.ic-user { width: 28px; height: 30px; margin: 0 12px 0 32px; }
.caret { width: 0; height: 0; border-left: 12px solid transparent; border-right: 12px solid transparent; border-top: 14px solid #aaa; margin-left: 8px; margin-bottom: 4px; }
.work { flex: 1; display: flex; min-height: 0; }
.canvas { position: relative; flex: 1; overflow: hidden; background-color: #fff;
  background-image:
    linear-gradient(#e2e2e2 2px, transparent 2px),
    linear-gradient(90deg, #e2e2e2 2px, transparent 2px),
    linear-gradient(#f3f3f3 2px, transparent 2px),
    linear-gradient(90deg, #f3f3f3 2px, transparent 2px);
  background-size: 160px 160px, 160px 160px, 20px 20px, 20px 20px;
  background-position: 0 137px, 159px 0, 0 17px, 19px 0;
}
.links { position: absolute; left: 0; top: 0; width: 2030px; height: 1160px; }
.vscroll { flex: none; width: 24px; background: #e6e6e6; border-left: 1px solid #f7f7f7; }
.vthumb { display: block; width: 21px; height: 286px; background: #c2c2c2; }
.hscroll { flex: none; height: 24px; background: linear-gradient(#e9e9e9, #dcdcdc); }
.hthumb { display: block; width: 535px; height: 22px; background: linear-gradient(#c8c8c8, #b4b4b4); }

/* schema tables */
.tbl { position: absolute; border: 2px solid #444; background: #000; box-shadow: 4px 6px 22px rgba(0,0,0,.4); font-size: 24px; color: #fff; }
.t-owner { left: 1009px; top: 48px; width: 456px; --cols: 44px 177px 145px 80px; }
.t-animals { left: 129px; top: 346px; width: 463px; --cols: 8px 210px 155px 80px; }
.t-species { left: 795px; top: 756px; width: 400px; --cols: 10px 121px 179px 80px; }
.t-pending { left: 1467px; top: 502px; width: 406px; --cols: 44px 126px 146px 80px; }
.tbl-head { height: 44px; background: #d8d8d8; color: #333; font-weight: 600; font-size: 23.500px; letter-spacing: 1.600px; display: flex; align-items: center; justify-content: space-between; padding: 0 4px 0 4px; }
.ic-edit { width: 30px; height: 30px; margin-top: 4px; }
.row { display: grid; grid-template-columns: var(--cols); column-gap: 2px; margin-top: 2px; height: 44px; white-space: nowrap; }
.c { background: var(--c); color: var(--t, #fff); height: 44px; line-height: 44px; letter-spacing: -.25px; }
.k { display: flex; align-items: center; justify-content: center; }
.n { padding-left: 7px; }
.y { padding-left: 6px; }
.a { display: flex; gap: 18px; padding: 6px 0 0 10px; }
.maroon { --c: #7f053f; }
.grey { --c: #4c4c4c; }
.navy { --c: #06407c; }
.teal { --c: #13807c; }
.olive { --c: #807f16; }
.paper { --c: #f9f9f9; --t: #000; }
.ic-key { width: 34px; height: 34px; }
.ic-pencil { width: 25px; height: 23px; opacity: .5; }
.ic-updown { width: 15px; height: 24px; opacity: .42; }
.paper .ic-updown { opacity: .9; }
.tbl-foot { margin-top: 2px; height: 46px; background: #f9f9f9; display: flex; align-items: center; padding-left: 8px; }
.ic-add { width: 30px; height: 30px; margin-right: 3px; }
.add-link { color: #2f6496; text-decoration: underline; font-size: 24px; letter-spacing: -.1px; }
.minimap { position: absolute; left: 1728px; top: 962px; width: 287px; height: 181px; border: 2px solid #777; background: #dcdcdc; }
.mini-view { width: 79px; height: 47px; background: #eeeefc; border: 2px solid #777; border-width: 0 2px 2px 0; }
.mini-box { position: absolute; background: #fff; border: 2px solid #555; }
.mb-1 { left: 38px; top: 2px; width: 18px; height: 14px; }
.mb-2 { left: 4px; top: 14px; width: 18px; height: 14px; }
.mb-3 { left: 54px; top: 20px; width: 18px; height: 10px; }
.mb-4 { left: 30px; top: 28px; width: 18px; height: 14px; }

/* sidebar */
.side { flex: 1; background: #dcdcdc; border-left: 2px solid #a8a8a8; display: flex; flex-direction: column; color: #000; }
.panel-head { flex: none; height: 76px; background: #cccccc; border-bottom: 3px solid #aaa; display: flex; align-items: center; font-weight: 600; font-size: 23.500px; letter-spacing: 1.600px; color: #111; padding-left: 61px; position: relative; }
.panel-2 { margin-top: 2px; }
.chev { position: absolute; left: 29px; top: 24px; width: 17px; height: 26px; }
.chev-d { position: absolute; left: 25px; top: 27px; width: 26px; height: 18px; }
.tree { list-style: none; margin: 0; padding: 49px 0 0; flex: 1; min-height: 0; font-size: 25.200px; }
.tree li { height: 40px; display: flex; align-items: center; white-space: nowrap; }
.cb { width: 28px; height: 28px; box-shadow: 0 0 0 2px #ccc; flex: none; margin-right: 11px; border-radius: 2px; }
.tri { width: 0; height: 0; border-left: 8px solid transparent; border-right: 8px solid transparent; border-top: 9px solid #999; margin-right: 14px; }
.lv0 { padding-left: 40px; }
.lv1 { padding-left: 81px; }
.lv2 { padding-left: 150px; }
.panel-3 { margin-bottom: 30px; border-top: 3px solid #aaa; height: 77px; }

/* wallpaper + dock */
.wallpaper { position: absolute; left: 0; top: 1458px; width: 2560px; height: 142px; z-index: 1;
  background: linear-gradient(90deg, #6f3f2a 0, #6f3f2a 330px, #bc7460 420px, #c27a52 1000px, #7c4a28 1500px, #e0652e 1800px, #4a1e0c 2100px, #3a1608 2560px); }
.dock { position: absolute; left: 95px; top: 1457px; width: 2370px; height: 133px; background: #101010; border: 3px solid #bdbdbd; border-top-width: 2px; border-radius: 34px; display: flex; padding: 17px 0 0 17px; gap: 30px; z-index: 4; }
.dk { position: relative; flex: none; width: 83px; height: 84px; }
.dki { width: 83px; height: 84px; display: block; overflow: visible; }
.run { position: absolute; left: 38px; top: 100px; width: 7px; height: 7px; border-radius: 50%; background: #888; }
.dk-rocket { width: 36px; margin: 0 23px 0 24px; }
.dki-rocket { width: 36px; height: 98px; position: absolute; top: -7px; left: 0; }
.dk-zoom { width: 90px; margin-left: -5px; }
.dki-zoom { width: 90px; height: 92px; position: absolute; top: -4px; left: 0; }
.dk-riot { width: 103px; margin: 0 -8px 0 -14px; }
.dki-riot { width: 103px; height: 104px; position: absolute; top: -10px; left: 0; }
.dock-sep { flex: none; width: 1px; height: 98px; background: #555; margin: -4px 8px 0 11px; }
.dk-trash { width: 76px; margin-left: 2px; }
.dki-trash { width: 76px; height: 96px; position: absolute; top: -8px; left: 0; }
.cal-m { font-family: Inter, sans-serif; font-size: 16px; font-weight: 500; fill: #fff; text-anchor: middle; }
.cal-d { font-family: Inter, sans-serif; font-size: 46px; font-weight: 300; fill: #222; text-anchor: middle; }
```
